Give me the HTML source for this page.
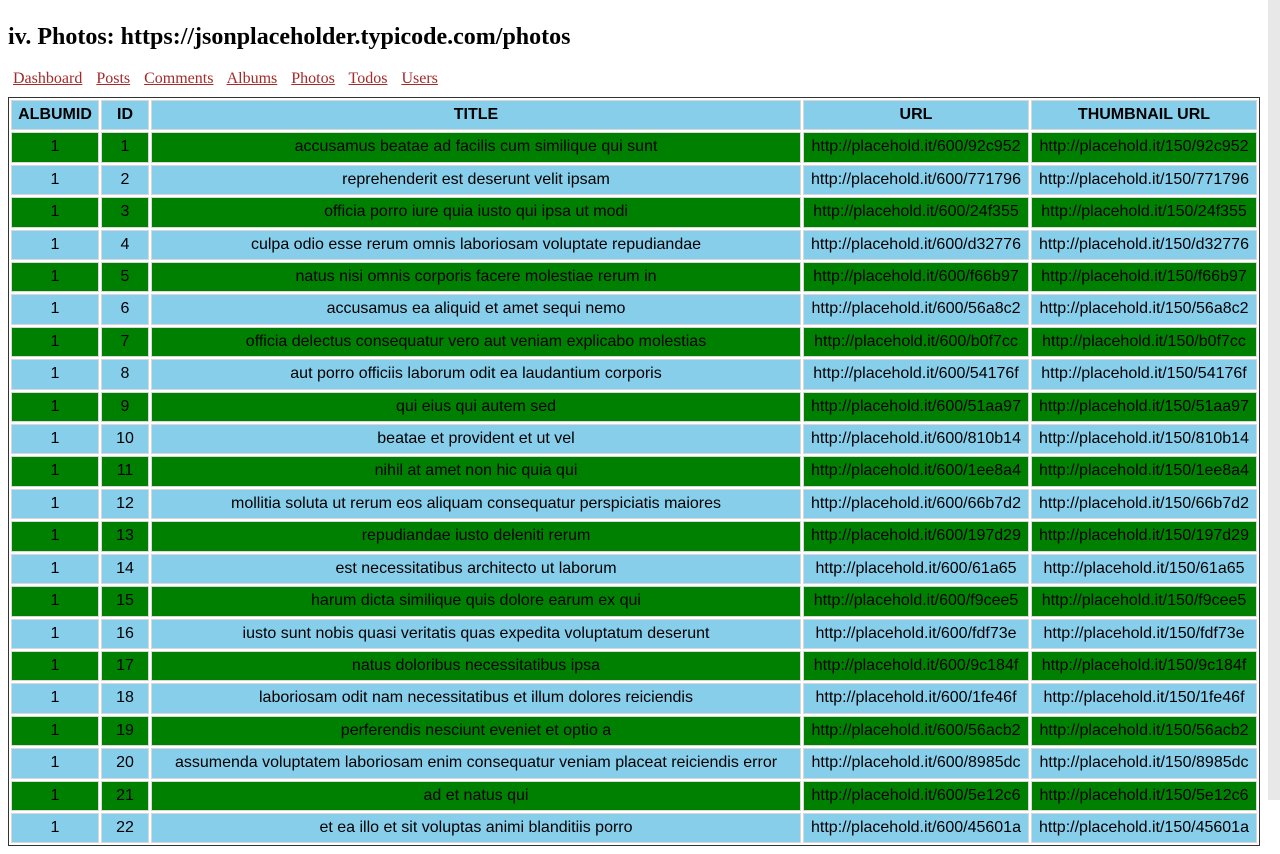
<!DOCTYPE html>
<html><head><meta charset="utf-8"><style>
html,body{margin:0;padding:0;background:#fff}
body{margin:8px;font-family:"Liberation Serif",serif;width:1252px}
h1{font-size:24px;margin:23px 0 19px 0;font-weight:bold;line-height:28px}
nav{margin:0 0 9px 5px;font-size:16px;line-height:18px}
nav a{color:#a52a2a;margin-right:10px;text-decoration:underline}
table{border:1px solid #333;border-spacing:2px;width:1252px;font-family:"Liberation Sans",sans-serif;font-size:16px}
td,th{border:1px solid #d8d8d8;text-align:center;padding:5px 3px;height:18.4px;line-height:18.4px;white-space:nowrap}
th{background:#87ceeb;font-weight:bold}
tr.g td{background:#008000}
tr.b td{background:#87ceeb}
.sb{position:fixed;right:0;top:0;width:12px;height:800px;background:#e8e8e8}
</style></head><body>
<div class="sb"></div>
<h1>iv. Photos: https://jsonplaceholder.typicode.com/photos</h1>
<nav><a>Dashboard</a> <a>Posts</a> <a>Comments</a> <a>Albums</a> <a>Photos</a> <a>Todos</a> <a>Users</a></nav>
<table>
<tr><th style="width:80px">ALBUMID</th><th style="width:40px">ID</th><th>TITLE</th><th style="width:218px">URL</th><th style="width:218px">THUMBNAIL URL</th></tr>
<tr class="g"><td>1</td><td>1</td><td>accusamus beatae ad facilis cum similique qui sunt</td><td>http://placehold.it/600/92c952</td><td>http://placehold.it/150/92c952</td></tr>
<tr class="b"><td>1</td><td>2</td><td>reprehenderit est deserunt velit ipsam</td><td>http://placehold.it/600/771796</td><td>http://placehold.it/150/771796</td></tr>
<tr class="g"><td>1</td><td>3</td><td>officia porro iure quia iusto qui ipsa ut modi</td><td>http://placehold.it/600/24f355</td><td>http://placehold.it/150/24f355</td></tr>
<tr class="b"><td>1</td><td>4</td><td>culpa odio esse rerum omnis laboriosam voluptate repudiandae</td><td>http://placehold.it/600/d32776</td><td>http://placehold.it/150/d32776</td></tr>
<tr class="g"><td>1</td><td>5</td><td>natus nisi omnis corporis facere molestiae rerum in</td><td>http://placehold.it/600/f66b97</td><td>http://placehold.it/150/f66b97</td></tr>
<tr class="b"><td>1</td><td>6</td><td>accusamus ea aliquid et amet sequi nemo</td><td>http://placehold.it/600/56a8c2</td><td>http://placehold.it/150/56a8c2</td></tr>
<tr class="g"><td>1</td><td>7</td><td>officia delectus consequatur vero aut veniam explicabo molestias</td><td>http://placehold.it/600/b0f7cc</td><td>http://placehold.it/150/b0f7cc</td></tr>
<tr class="b"><td>1</td><td>8</td><td>aut porro officiis laborum odit ea laudantium corporis</td><td>http://placehold.it/600/54176f</td><td>http://placehold.it/150/54176f</td></tr>
<tr class="g"><td>1</td><td>9</td><td>qui eius qui autem sed</td><td>http://placehold.it/600/51aa97</td><td>http://placehold.it/150/51aa97</td></tr>
<tr class="b"><td>1</td><td>10</td><td>beatae et provident et ut vel</td><td>http://placehold.it/600/810b14</td><td>http://placehold.it/150/810b14</td></tr>
<tr class="g"><td>1</td><td>11</td><td>nihil at amet non hic quia qui</td><td>http://placehold.it/600/1ee8a4</td><td>http://placehold.it/150/1ee8a4</td></tr>
<tr class="b"><td>1</td><td>12</td><td>mollitia soluta ut rerum eos aliquam consequatur perspiciatis maiores</td><td>http://placehold.it/600/66b7d2</td><td>http://placehold.it/150/66b7d2</td></tr>
<tr class="g"><td>1</td><td>13</td><td>repudiandae iusto deleniti rerum</td><td>http://placehold.it/600/197d29</td><td>http://placehold.it/150/197d29</td></tr>
<tr class="b"><td>1</td><td>14</td><td>est necessitatibus architecto ut laborum</td><td>http://placehold.it/600/61a65</td><td>http://placehold.it/150/61a65</td></tr>
<tr class="g"><td>1</td><td>15</td><td>harum dicta similique quis dolore earum ex qui</td><td>http://placehold.it/600/f9cee5</td><td>http://placehold.it/150/f9cee5</td></tr>
<tr class="b"><td>1</td><td>16</td><td>iusto sunt nobis quasi veritatis quas expedita voluptatum deserunt</td><td>http://placehold.it/600/fdf73e</td><td>http://placehold.it/150/fdf73e</td></tr>
<tr class="g"><td>1</td><td>17</td><td>natus doloribus necessitatibus ipsa</td><td>http://placehold.it/600/9c184f</td><td>http://placehold.it/150/9c184f</td></tr>
<tr class="b"><td>1</td><td>18</td><td>laboriosam odit nam necessitatibus et illum dolores reiciendis</td><td>http://placehold.it/600/1fe46f</td><td>http://placehold.it/150/1fe46f</td></tr>
<tr class="g"><td>1</td><td>19</td><td>perferendis nesciunt eveniet et optio a</td><td>http://placehold.it/600/56acb2</td><td>http://placehold.it/150/56acb2</td></tr>
<tr class="b"><td>1</td><td>20</td><td>assumenda voluptatem laboriosam enim consequatur veniam placeat reiciendis error</td><td>http://placehold.it/600/8985dc</td><td>http://placehold.it/150/8985dc</td></tr>
<tr class="g"><td>1</td><td>21</td><td>ad et natus qui</td><td>http://placehold.it/600/5e12c6</td><td>http://placehold.it/150/5e12c6</td></tr>
<tr class="b"><td>1</td><td>22</td><td>et ea illo et sit voluptas animi blanditiis porro</td><td>http://placehold.it/600/45601a</td><td>http://placehold.it/150/45601a</td></tr>
</table>
</body></html>
